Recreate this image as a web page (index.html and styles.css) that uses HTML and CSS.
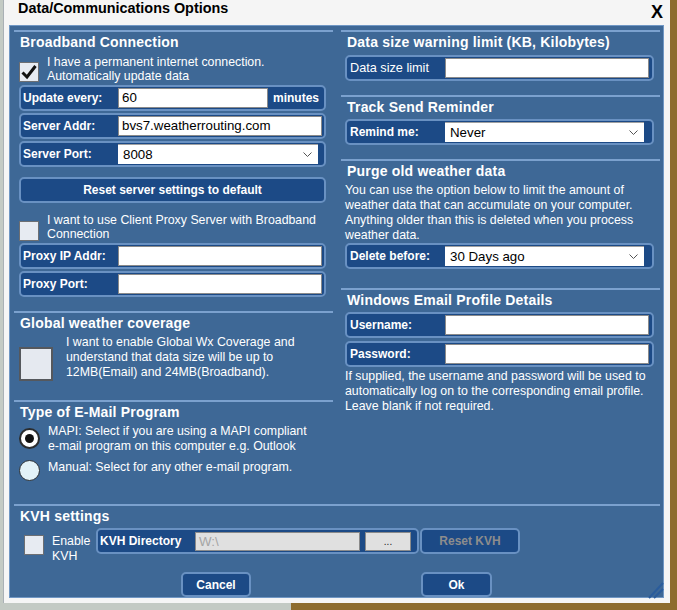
FILE: index.html
```html
<!DOCTYPE html>
<html>
<head>
<meta charset="utf-8">
<title>Data/Communications Options</title>
<link rel="stylesheet" href="styles.css">
</head>
<body>
<div class="dialog">
  <div class="titlebar">
    <span class="title">Data/Communications Options</span>
    <span class="close">X</span>
  </div>
  <div class="panel">
    <div class="cols">
      <div class="col">
        <section class="sec s-broadband">
          <h2 class="heading">Broadband Connection</h2>
          <div class="checkrow cr-perm">
            <span class="checkbox checked"><svg viewBox="0 0 20 20" width="20" height="20"><path d="M3.5 10.5 L8 15 L16.5 4" fill="none" stroke="#111" stroke-width="3"/></svg></span>
            <span class="ctext">I have a permanent internet connection.<br>Automatically update data</span>
          </div>
          <div class="group g-left g-first">
            <span class="label">Update every:</span>
            <span class="field f-short">60</span>
            <span class="label unit">minutes</span>
          </div>
          <div class="group g-left">
            <span class="label">Server Addr:</span>
            <span class="field f-full">bvs7.weatherrouting.com</span>
          </div>
          <div class="group g-left">
            <span class="label">Server Port:</span>
            <span class="select s-left"><span class="stext">8008</span><svg class="chev" viewBox="0 0 9 5" width="9" height="5"><polyline points="0.5,0.5 4.5,4.5 8.5,0.5" fill="none" stroke="#555" stroke-width="1"/></svg></span>
          </div>
          <div class="btn btn-reset">Reset server settings to default</div>
          <div class="checkrow cr-proxy">
            <span class="checkbox"></span>
            <span class="ctext">I want to use Client Proxy Server with Broadband<br>Connection</span>
          </div>
          <div class="group g-left g-first">
            <span class="label">Proxy IP Addr:</span>
            <span class="field f-full"></span>
          </div>
          <div class="group g-left">
            <span class="label">Proxy Port:</span>
            <span class="field f-full"></span>
          </div>
        </section>
        <section class="sec s-global">
          <h2 class="heading">Global weather coverage</h2>
          <div class="checkrow cr-global">
            <span class="checkbox big"></span>
            <span class="ptext">I want to enable Global Wx Coverage and<br>understand that data size will be up to<br>12MB(Email) and 24MB(Broadband).</span>
          </div>
        </section>
        <section class="sec s-email">
          <h2 class="heading">Type of E-Mail Program</h2>
          <div class="checkrow cr-mapi">
            <span class="radio checked"><span class="dot"></span></span>
            <span class="ptext">MAPI: Select if you are using a MAPI compliant<br>e-mail program on this computer e.g. Outlook</span>
          </div>
          <div class="checkrow cr-manual">
            <span class="radio"></span>
            <span class="ptext">Manual: Select for any other e-mail program.</span>
          </div>
        </section>
      </div>
      <div class="col">
        <section class="sec s-size">
          <h2 class="heading">Data size warning limit (KB, Kilobytes)</h2>
          <div class="group g-right g-size">
            <span class="label thin">Data size limit</span>
            <span class="field f-full"></span>
          </div>
        </section>
        <section class="sec s-track">
          <h2 class="heading">Track Send Reminder</h2>
          <div class="group g-right g-mt4">
            <span class="label">Remind me:</span>
            <span class="select s-right"><span class="stext">Never</span><svg class="chev" viewBox="0 0 9 5" width="9" height="5"><polyline points="0.5,0.5 4.5,4.5 8.5,0.5" fill="none" stroke="#555" stroke-width="1"/></svg></span>
          </div>
        </section>
        <section class="sec s-purge">
          <h2 class="heading">Purge old weather data</h2>
          <p class="para p-purge">You can use the option below to limit the amount of<br>weather data that can accumulate on your computer.<br>Anything older than this is deleted when you process<br>weather data.</p>
          <div class="group g-right">
            <span class="label">Delete before:</span>
            <span class="select s-right"><span class="stext">30 Days ago</span><svg class="chev" viewBox="0 0 9 5" width="9" height="5"><polyline points="0.5,0.5 4.5,4.5 8.5,0.5" fill="none" stroke="#555" stroke-width="1"/></svg></span>
          </div>
        </section>
        <section class="sec s-windows">
          <h2 class="heading">Windows Email Profile Details</h2>
          <div class="group g-right g-mt4">
            <span class="label">Username:</span>
            <span class="field f-full"></span>
          </div>
          <div class="group g-right g-mt3">
            <span class="label">Password:</span>
            <span class="field f-full"></span>
          </div>
          <p class="para p-win">If supplied, the username and password will be used to<br>automatically log on to the corresponding email profile.<br>Leave blank if not required.</p>
        </section>
      </div>
    </div>
    <section class="sec s-kvh">
      <h2 class="heading">KVH settings</h2>
      <div class="kvhrow">
        <span class="checkbox kvh-check"></span>
        <span class="ptext kvh-text">Enable<br>KVH</span>
        <div class="group g-kvh">
          <span class="label">KVH Directory</span>
          <span class="field disabled f-dir">W:\</span>
          <span class="browse">...</span>
        </div>
        <div class="btn btn-kvh disabled-text">Reset KVH</div>
      </div>
    </section>
    <div class="buttons">
      <div class="btn btn-action">Cancel</div>
      <div class="btn btn-action btn-ok">Ok</div>
    </div>
    <svg class="grip" viewBox="0 0 20 20" width="20" height="20">
      <line x1="3" y1="18" x2="17" y2="3" stroke="#2a5c9c" stroke-width="2"/>
      <line x1="8" y1="18" x2="17" y2="9" stroke="#2a5c9c" stroke-width="2"/>
    </svg>
  </div>
</div>
</body>
</html>
```

FILE: styles.css
```css
* { box-sizing: border-box; }
html, body { margin: 0; padding: 0; }
body {
  width: 677px;
  height: 610px;
  overflow: hidden;
  background: linear-gradient(90deg, #c3cac4 0, #c3cac4 43%, #8d6c2f 43%);
  font-family: "Liberation Sans", Arial, sans-serif;
  color: #fff;
}
.dialog {
  margin-left: 3px;
  width: 667px;
  height: 603px;
  background: #f5f5f5;
  border-left: 1px solid #a9b0b5;
  padding: 0 6px 0 5px;
  display: flex;
  flex-direction: column;
  position: relative;
}
.titlebar {
  height: 25px;
  display: flex;
  justify-content: space-between;
  align-items: flex-start;
  color: #000;
  padding-left: 9px;
}
.title {
  font-weight: bold;
  font-size: 14.4px;
  line-height: 16px;
}
.close {
  font-weight: bold;
  font-size: 18px;
  line-height: 18px;
  margin-top: 3px;
  margin-right: 1px;
}
.panel {
  height: 573px;
  background: #3e6896;
  border: 1px solid #7097c4;
  padding: 4px 3px 0 4px;
  position: relative;
}
.cols {
  display: flex;
  gap: 8px;
}
.col {
  width: 319px;
  display: flex;
  flex-direction: column;
}
.sec {
  border-top: 2px solid #7ba1ce;
  padding-top: 2px;
}
.s-broadband { height: 281px; }
.s-global { height: 89px; }
.s-email { height: 104px; }
.s-size { height: 65px; }
.s-track { height: 64px; }
.s-purge { height: 129px; }
.s-windows { height: 216px; }
.s-kvh { height: 66px; }
.heading {
  margin: 0;
  font-size: 14px;
  letter-spacing: 0.2px;
  line-height: 16px;
  height: 16px;
  font-weight: bold;
  padding-left: 6px;
}
.checkrow {
  display: flex;
  align-items: flex-start;
  padding-left: 5px;
}
.ctext {
  font-size: 12.35px;
  line-height: 14px;
  margin-left: 8px;
}
.ptext {
  font-size: 12.35px;
  line-height: 15px;
}
.cr-perm { margin-top: 5px; }
.cr-perm .checkbox { margin-top: 7px; }
.cr-proxy { margin-top: 10px; }
.cr-proxy .checkbox { margin-top: 8px; }
.cr-global { margin-top: 4px; }
.cr-global .ptext { margin-left: 13px; }
.cr-mapi { margin-top: 4px; }
.cr-mapi .radio { margin-top: 4px; }
.cr-manual { margin-top: 6px; }
.cr-mapi .ptext, .cr-manual .ptext { margin-left: 8px; }
.checkbox {
  flex: none;
  width: 20px;
  height: 20px;
  background: #e7ebf2;
  border: 1px solid #6d6f73;
  display: block;
}
.checkbox svg { display: block; margin: -1px; }
.checkbox.big {
  width: 34px;
  height: 34px;
  margin-top: 12px;
  border: 2px solid #55585d;
  background: #e5e9f0;
}
.radio {
  flex: none;
  width: 21px;
  height: 21px;
  border-radius: 50%;
  background: #e3f3f8;
  border: 1.5px solid #2f3336;
  display: flex;
  align-items: center;
  justify-content: center;
}
.radio.checked {
  background: #fff;
  border: 2.5px solid #2a2c2e;
}
.radio .dot {
  width: 9px;
  height: 9px;
  border-radius: 50%;
  background: #111;
}
.group {
  height: 26px;
  background: #1c4a86;
  border: 2px solid #6991c2;
  border-radius: 5px;
  display: flex;
  align-items: center;
  padding: 1px 0;
}
.g-left {
  margin: 2px 7px 0 5px;
  padding-right: 2px;
}
.g-left.g-first { margin-top: 2px; }
.g-right {
  margin: 0 6px 0 4px;
  padding-right: 3px;
}
.g-size { margin-top: 5px; }
.g-mt4 { margin-top: 4px; }
.g-mt3 { margin-top: 3px; }
.label {
  flex: none;
  width: 97px;
  padding-left: 2px;
  font-weight: bold;
  font-size: 12px;
  white-space: nowrap;
}
.g-right .label { width: 98px; padding-left: 3px; }
.label.thin { font-weight: normal; font-size: 12.7px; }
.label.unit { width: auto; padding-left: 5px; }
.field {
  height: 20px;
  background: #fff;
  border: 1px solid #8a8a8a;
  color: #000;
  font-size: 13.3px;
  line-height: 18px;
  padding-left: 3px;
  white-space: nowrap;
}
.f-full { flex: 1; }
.f-short { width: 150px; flex: none; }
.select {
  height: 20px;
  background: #fff;
  border-top: 1px solid #a0a0a0;
  color: #000;
  font-size: 13.3px;
  line-height: 19px;
  padding: 0 6px 0 5px;
  display: flex;
  align-items: center;
  justify-content: space-between;
}
.s-left { width: 200px; }
.s-right { width: 199px; }
.chev { display: block; }
.btn {
  height: 26px;
  background: #1c4a86;
  border: 2px solid #6991c2;
  border-radius: 5px;
  font-weight: bold;
  font-size: 12px;
  display: flex;
  align-items: center;
  justify-content: center;
}
.btn-reset { margin: 10px 7px 0 5px; }
.para {
  margin: 0;
  font-size: 12.35px;
  line-height: 15px;
  padding-left: 4px;
}
.p-purge { margin-top: 4px; }
.p-win { margin-top: 2px; }
.kvhrow {
  display: flex;
  align-items: flex-start;
  margin-top: 4px;
  padding-left: 10px;
}
.kvh-check { margin-top: 7px; }
.kvh-text { width: 52px; padding-left: 8px; margin-top: 6px; }
.g-kvh {
  width: 323px;
  padding-right: 6px;
}
.field.disabled {
  background: #e0e0e0;
  color: #a5a5a5;
}
.f-dir { width: 165px; flex: none; height: 19px; }
.browse {
  width: 46px;
  height: 19px;
  margin-left: 5px;
  background: #e0e0e0;
  border: 1px solid #8a8a8a;
  color: #222;
  font-size: 10px;
  line-height: 18px;
  text-align: center;
}
.btn-kvh {
  width: 100px;
  margin-left: 1px;
  height: 26px;
}
.disabled-text { color: #8d8d8d; }
.buttons {
  display: flex;
  padding-top: 2px;
  padding-left: 167px;
}
.btn-action {
  width: 70px;
  height: 25px;
}
.btn-ok { margin-left: 170px; width: 71px; }
.grip {
  position: absolute;
  right: -3px;
  bottom: -3px;
}
```
